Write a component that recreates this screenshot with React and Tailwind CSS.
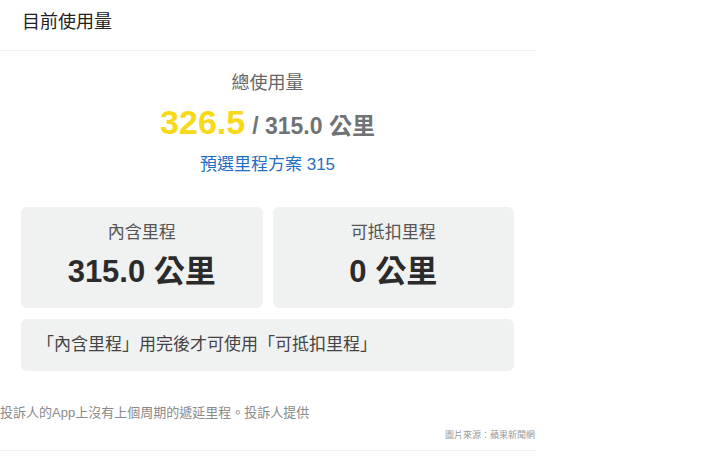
import React from 'react';

const font = { fontFamily: '"Liberation Sans", "Noto Sans CJK TC", sans-serif' };

function StatCard({ label, value }) {
  return (
    <div className="flex h-[101px] flex-col items-center rounded-[6px] bg-[#f0f1f1] pt-[15px]">
      <div className="text-[17px] leading-[22px] text-[#555]">{label}</div>
      <div className="mt-[10px] text-[31px] font-bold leading-[36px] text-[#2b2b2b]">{value}</div>
    </div>
  );
}

export default function App() {
  return (
    <div className="h-[461px] w-[720px] bg-white" style={font}>
      <div className="w-[535px]">
        {/* screenshot of the app */}
        <div className="flex h-[51px] border-b border-[#f0f0f0] pl-[22px] pt-[10px] text-[18px] leading-[24px] text-[#222]">
          目前使用量
        </div>

        <div className="flex flex-col items-center pt-[20px]">
          <div className="text-[18px] leading-[24px] text-[#666]">總使用量</div>
          <div className="mt-[7px] flex items-baseline leading-[40px]">
            <span className="text-[34px] font-bold text-[#f7d917]">326.5</span>
            <span className="ml-[7px] text-[23px] font-bold text-[#6f7375]">/ 315.0 公里</span>
          </div>
          <div className="mt-[8px] text-[17px] leading-[22px] text-[#1f6fc5]">預選里程方案 315</div>
        </div>

        <div className="ml-[21px] mt-[31px] grid w-[493px] grid-cols-2 gap-[10px]">
          <StatCard label="內含里程" value="315.0 公里" />
          <StatCard label="可抵扣里程" value="0 公里" />
        </div>

        <div className="ml-[21px] mt-[11px] flex h-[52px] w-[493px] items-center rounded-[6px] bg-[#f0f1f1] pl-[16px] text-[17px] text-[#444]">
          「內含里程」用完後才可使用「可抵扣里程」
        </div>

        {/* caption */}
        <div className="mt-[33px] text-[13px] leading-[18px] text-[#8a8a8a]">
          投訴人的App上沒有上個周期的遞延里程。投訴人提供
        </div>
        <div className="mt-[7px] pb-[9px] text-right text-[9px] leading-[12px] text-[#999]">
          圖片來源：蘋果新聞網
        </div>
        <div className="h-px bg-[#f0f0f0]" />
      </div>
    </div>
  );
}
